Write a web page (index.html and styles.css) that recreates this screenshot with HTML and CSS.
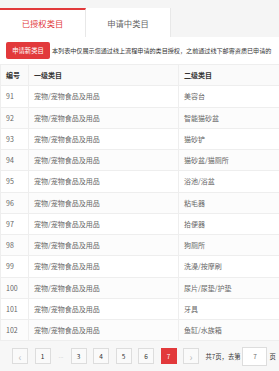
FILE: index.html
```html
<!DOCTYPE html>
<html lang="zh-CN">
<head>
  <meta charset="UTF-8"><meta name="viewport" content="width=device-width, initial-scale=1.0">
  <title>类目授权</title>
  <link rel="stylesheet" href="styles.css">
</head>
<body>
  <div class="page">
    <div class="tabs">
      <div class="tab tabActive">已授权类目</div>
      <div class="tab">申请中类目</div>
    </div>
    <div class="panel">
      <div class="toolbar">
        <button class="applyBtn">申请新类目</button>
        <span class="notice">本列表中仅展示您通过线上流程申请的类目授权，之前通过线下邮寄资质已申请的</span>
      </div>
      <table class="grid">
        <thead>
          <tr><th class="colNo">编号</th><th class="colFirst">一级类目</th><th>二级类目</th></tr>
        </thead>
        <tbody>
          <tr><td>91</td><td>宠物/宠物食品及用品</td><td>美容台</td></tr>
          <tr><td>92</td><td>宠物/宠物食品及用品</td><td>智能猫砂盆</td></tr>
          <tr><td>93</td><td>宠物/宠物食品及用品</td><td>猫砂铲</td></tr>
          <tr><td>94</td><td>宠物/宠物食品及用品</td><td>猫砂盆/猫厕所</td></tr>
          <tr><td>95</td><td>宠物/宠物食品及用品</td><td>浴池/浴盆</td></tr>
          <tr><td>96</td><td>宠物/宠物食品及用品</td><td>粘毛器</td></tr>
          <tr><td>97</td><td>宠物/宠物食品及用品</td><td>拾便器</td></tr>
          <tr><td>98</td><td>宠物/宠物食品及用品</td><td>狗厕所</td></tr>
          <tr><td>99</td><td>宠物/宠物食品及用品</td><td>洗澡/按摩刷</td></tr>
          <tr><td>100</td><td>宠物/宠物食品及用品</td><td>尿片/尿垫/护垫</td></tr>
          <tr><td>101</td><td>宠物/宠物食品及用品</td><td>牙具</td></tr>
          <tr><td>102</td><td>宠物/宠物食品及用品</td><td>鱼缸/水族箱</td></tr>
        </tbody>
      </table>
      <div class="pager">
        <span class="pageBtn pageOff">&lsaquo;</span>
        <span class="pageBtn">1</span>
        <span class="pageDots">...</span>
        <span class="pageBtn">3</span>
        <span class="pageBtn">4</span>
        <span class="pageBtn">5</span>
        <span class="pageBtn">6</span>
        <span class="pageBtn pageCur">7</span>
        <span class="pageBtn pageOff">&rsaquo;</span>
        <span class="pageInfo">共7页，去第</span>
        <input class="pageInput" type="text" value="7">
        <span class="pageInfo">页</span>
      </div>
    </div>
  </div>
</body>
</html>
```

FILE: styles.css
```css
body { margin: 0; padding: 0; background-color: #fff; font-family: "Noto Sans CJK SC", "Open Sans", sans-serif; }
.page { width: 279px; overflow: hidden; padding-top: 8px; background-color: #f5f5f5; }
.tabs { display: flex; height: 29px; background-color: #f5f5f5; }
.tab { width: 85px; border-right: 1px solid #e8e8e8; background-color: #fff; color: #666; font-size: 8.3px; display: flex; align-items: center; justify-content: center; box-sizing: border-box; }
.tabActive { color: #e2393b; border-top: 2px solid #e2393b; padding-bottom: 2px; width: 86px; }
.panel { background-color: #fff; width: 320px; }
.toolbar { display: flex; align-items: center; height: 27px; padding-left: 6px; white-space: nowrap; }
.applyBtn { width: 44px; height: 17px; border: none; border-radius: 2px; background-color: #e2393b; color: #fff; font-family: inherit; font-size: 6.3px; padding: 0; flex-shrink: 0; cursor: pointer; }
.notice { margin-left: 2px; font-size: 6.1px; color: #333; }
.grid { border-collapse: collapse; width: 320px; border-left: 1px solid #eee; }
.grid th, .grid td { height: 21.25px; padding: 0 0 0 5px; border: 1px solid #eee; box-sizing: border-box; text-align: left; font-size: 7px; font-weight: normal; }
.grid th { color: #333; font-weight: bold; background-color: #fafafa; }
.grid td { color: #666; }
.grid tbody tr:nth-child(even) td { background-color: #fcfcfc; }
.colNo { width: 28px; }
.colFirst { width: 150px; }
.pager { display: flex; align-items: center; height: 30px; padding-left: 12px; background-color: #f7f7f7; width: 279px; box-sizing: border-box; white-space: nowrap; }
.pageBtn { flex-shrink: 0; width: 16px; height: 16px; margin-right: 6.5px; border: 1px solid #ddd; box-sizing: border-box; background-color: #fafafa; color: #333; font-size: 6.5px; display: flex; align-items: center; justify-content: center; }
.pageOff { color: #bbb; font-size: 10px; }
.pageCur { background-color: #e2393b; border-color: #e2393b; color: #fff; }
.pageDots { flex-shrink: 0; width: 10px; margin-left: -1px; margin-right: 4.5px; color: #bbb; font-size: 6px; text-align: center; font-family: "Liberation Sans", sans-serif; }
.pageInfo { flex-shrink: 0; font-size: 6.3px; color: #333; margin-right: 2px; }
.pageInput { flex-shrink: 0; width: 25px; height: 19px; box-sizing: border-box; border: 1px solid #ddd; padding: 0; text-align: center; font-size: 6.5px; color: #666; font-family: inherit; margin-right: 2px; outline: none; }
```
